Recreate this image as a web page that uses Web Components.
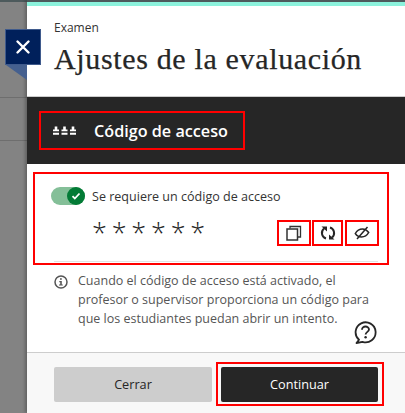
<!DOCTYPE html>
<html lang="es">
<head>
<meta charset="utf-8">
<title>Ajustes de la evaluación</title>
<style>
  html, body { margin: 0; height: 100%; overflow: hidden; }
  body { font-family: "Open Sans", "Liberation Sans", sans-serif; color: #262626; }
</style>
</head>
<body>
<app-shell>
  <panel-header label="Examen" heading="Ajustes de la evaluación"></panel-header>
  <access-bar>Código de acceso</access-bar>
  <code-box></code-box>
  <info-note>Cuando el código de acceso está activado, el profesor o supervisor proporciona un código para que los estudiantes puedan abrir un intento.</info-note>
  <panel-footer></panel-footer>
</app-shell>
<script>
class AppShell extends HTMLElement {
  constructor() {
    super();
    const shadow = this.attachShadow({ mode: 'open' });
    shadow.innerHTML = `
      <style>
        :host { display: flex; width: 405px; height: 413px; position: relative; overflow: hidden; background: #838383; }
        .backdrop {
          width: 27px; flex: none;
          display: flex; flex-direction: column;
          background: #838383;
          border-top: 2px solid #4d5a5c;
        }
        .backdrop i { display: block; height: 1px; background: #6e6e6e; margin-top: 95px; }
        .backdrop i + i { margin-top: 42px; }
        .panel {
          flex: 1; min-width: 0;
          display: flex; flex-direction: column;
          background: #fff;
          border-top: 2px solid #4d5a5c;
          box-shadow: -2px 0 3px rgba(0,0,0,.25);
        }
        .accent { height: 4px; background: #8cf2dc; flex: none; }
        .close {
          position: absolute; left: 5px; top: 29px;
          width: 36px; height: 36px;
          box-sizing: border-box;
          background: #00205b;
          border: 1px solid #3f5a8c;
          display: flex; align-items: center; justify-content: center;
        }
        .fold { position: absolute; left: 6px; top: 65px; }
      </style>
      <div class="backdrop"><i></i><i></i></div>
      <div class="panel">
        <div class="accent"></div>
        <slot></slot>
      </div>
      <div class="close">
        <svg width="16" height="16" viewBox="0 0 16 16"><path d="M2.5 2.5l11 11M13.500 2.500l-11 11" stroke="#fff" stroke-width="2.400" stroke-linecap="round"/></svg>
      </div>
      <svg class="fold" width="21" height="15" viewBox="0 0 21 15"><path d="M0 0H21V15Z" fill="#45608f"/></svg>
    `;
  }
}
customElements.define('app-shell', AppShell);

class PanelHeader extends HTMLElement {
  constructor() {
    super();
    this.attachShadow({ mode: 'open' });
  }
  connectedCallback() {
    this.shadowRoot.innerHTML = `
      <style>
        :host { display: block; height: 91px; box-sizing: border-box; padding: 13px 0 0 27px; border-bottom: 1px solid #cdcdcd; }
        .label { font-size: 12px; line-height: 18px; color: #333; }
        h1 {
          margin: 3px 0 0;
          font: 400 30px/38px "Liberation Serif", serif;
          letter-spacing: 0.650px;
          -webkit-text-stroke: 0.250px #262626;
          color: #262626;
          white-space: nowrap;
        }
      </style>
      <div class="label">${this.getAttribute('label')}</div>
      <h1>${this.getAttribute('heading')}</h1>
    `;
  }
}
customElements.define('panel-header', PanelHeader);

class AccessBar extends HTMLElement {
  constructor() {
    super();
    const shadow = this.attachShadow({ mode: 'open' });
    shadow.innerHTML = `
      <style>
        :host { display: block; background: #262626; height: 67px; box-sizing: border-box; padding: 14px 0 0 12px; }
        .frame {
          display: flex; align-items: center;
          width: 206px; height: 39px; box-sizing: border-box;
          border: 2px solid #f00;
          padding-left: 12px;
          color: #fff; font-weight: 600; font-size: 16.200px;
        }
        svg { margin-right: 18px; flex: none; }
      </style>
      <div class="frame">
        <svg width="23" height="10" viewBox="0 0 23 10" fill="#fff">
          <path d="M1.700 .5h2.600v3H6v1.800H0V3.500h1.700zM0 6.800h6v2H0z"/>
          <path d="M10.200 .5h2.600v3h1.700v1.800h-6V3.500h1.700zM8.500 6.800h6v2h-6z"/>
          <path d="M18.700 .5h2.600v3H23v1.800h-6V3.500h1.700zM17 6.800h6v2h-6z"/>
        </svg>
        <slot></slot>
      </div>
    `;
  }
}
customElements.define('access-bar', AccessBar);

class ToggleSwitch extends HTMLElement {
  constructor() {
    super();
    const shadow = this.attachShadow({ mode: 'open' });
    shadow.innerHTML = `
      <style>
        :host { display: block; position: relative; width: 34px; height: 18px; border-radius: 9px; background: #84bf98; flex: none; }
        .knob {
          position: absolute; right: 0; top: 0;
          width: 18px; height: 18px; border-radius: 50%;
          background: #037b36;
          display: flex; align-items: center; justify-content: center;
        }
      </style>
      <div class="knob">
        <svg width="10" height="10" viewBox="0 0 10 10"><path d="M1.500 5.200l2.300 2.300 4.700-5" fill="none" stroke="#fff" stroke-width="1.800"/></svg>
      </div>
    `;
  }
}
customElements.define('toggle-switch', ToggleSwitch);

class IconButton extends HTMLElement {
  constructor() {
    super();
    const shadow = this.attachShadow({ mode: 'open' });
    shadow.innerHTML = `
      <style>
        :host {
          display: flex; align-items: center; justify-content: center;
          height: 26px; box-sizing: border-box;
          border: 2px solid #f00;
        }
      </style>
      <slot></slot>
    `;
  }
}
customElements.define('icon-button', IconButton);

class CodeBox extends HTMLElement {
  constructor() {
    super();
    const shadow = this.attachShadow({ mode: 'open' });
    shadow.innerHTML = `
      <style>
        :host {
          display: block; box-sizing: border-box;
          width: 356px; height: 93px;
          margin: 8px 0 0 6px;
          border: 2px solid #f00;
          padding: 13px 0 0 16px;
        }
        .top { display: flex; align-items: center; gap: 7px; font-size: 12.550px; color: #333; height: 18px; }
        .bottom { display: flex; margin-top: 15px; align-items: flex-start; }
        .stars { width: 185px; padding-left: 41px; font: 300 27px/25px "Open Sans", sans-serif; letter-spacing: 4.800px; color: #262626; flex: none; white-space: nowrap; }
        .tools { display: flex; }
        icon-button:nth-child(1) { width: 34px; }
        icon-button:nth-child(2) { width: 31px; margin-left: 1px; }
        icon-button:nth-child(3) { width: 34px; margin-left: 2px; }
      </style>
      <div class="top"><toggle-switch></toggle-switch><span>Se requiere un código de acceso</span></div>
      <div class="bottom">
        <div class="stars">******</div>
        <div class="tools">
          <icon-button>
            <svg width="16" height="16" viewBox="0 0 16 16" fill="none" stroke="#333"><rect x="1" y="4" width="10.500" height="11" stroke-width="1.500"/><path d="M4 3.500V1.500h10.500V12h-2.500" stroke-width="1.300"/></svg>
          </icon-button>
          <icon-button>
            <svg width="16" height="16" viewBox="0 0 16 16" fill="none" stroke="#262626" stroke-width="2"><path d="M6 13.500A5.800 5.800 0 0 1 4 3.500"/><path d="M10 2.500A5.800 5.800 0 0 1 12 12.500"/><path d="M1.500 1.500h5.500v5zM14.500 14.500H9v-5z" fill="#262626" stroke="none"/></svg>
          </icon-button>
          <icon-button>
            <svg width="16" height="14" viewBox="0 0 16 14" fill="none" stroke="#262626" stroke-width="1.500"><path d="M1.300 7.500C3 4.500 5.500 3 8.500 3c2.300 0 4.400 1 6.200 3.500C13 9.500 10.500 11 7.500 11 5 11 3 10 1.300 7.500z"/><path d="M3 13L13.500 1"/></svg>
          </icon-button>
        </div>
      </div>
    `;
  }
}
customElements.define('code-box', CodeBox);

class InfoNote extends HTMLElement {
  constructor() {
    super();
    const shadow = this.attachShadow({ mode: 'open' });
    shadow.innerHTML = `
      <style>
        :host { display: block; flex: 1; min-height: 0; box-sizing: border-box; margin: -4px 0 0 0; }
        .wrap { margin: 0 0 0 27px; width: 324px; border-top: 1px solid #e3e3e3; padding: 9px 0 0 24px; box-sizing: border-box; position: relative; font-size: 12.500px; line-height: 19px; color: #555; }
        .i { position: absolute; left: 0; top: 13px; }
        .help { position: absolute; left: 300px; top: 59px; }
      </style>
      <div class="wrap">
        <svg class="i" width="14" height="14" viewBox="0 0 14 14"><circle cx="7" cy="7" r="6" fill="none" stroke="#555" stroke-width="1.500"/><path d="M6 3.200h1.800v1.600H6zM5.300 6h2.500v3.400h1v1.200H5V9.400h1.200V7.200h-.9z" fill="#555"/></svg>
        <slot></slot>
        <svg class="help" width="23" height="23" viewBox="0 0 23 23" fill="none"><path d="M5 18.800A10 10 0 1 1 8.500 20.800L2.500 22z" stroke="#262626" stroke-width="1.800" stroke-linejoin="round"/><path d="M8 8.800c0-2 1.600-3.300 3.500-3.300s3.500 1.300 3.500 3c0 2.300-3.400 2.500-3.400 5" stroke="#262626" stroke-width="1.800"/><circle cx="11.600" cy="16.300" r="1.200" fill="#262626"/></svg>
      </div>
    `;
  }
}
customElements.define('info-note', InfoNote);

class PanelFooter extends HTMLElement {
  constructor() {
    super();
    const shadow = this.attachShadow({ mode: 'open' });
    shadow.innerHTML = `
      <style>
        :host {
          display: flex; gap: 4px; flex: none; align-items: center;
          height: 61px; box-sizing: border-box;
          background: #f8f8f8; border-top: 1px solid #cdcdcd;
          padding: 2px 0 0 27px;
        }
        .btn {
          display: flex; align-items: center; justify-content: center;
          height: 35px; width: 158px; border-radius: 2px; font-size: 12.700px; box-sizing: border-box;
        }
        .cancel { background: #cdcdcd; color: #262626; }
        .frame { border: 2px solid #f00; padding-left: 3px; display: flex; height: 44px; width: 168px; box-sizing: border-box; align-items: center; }
        .ok { background: #262626; color: #fff; width: 157px; }
      </style>
      <div class="btn cancel">Cerrar</div>
      <div class="frame"><div class="btn ok">Continuar</div></div>
    `;
  }
}
customElements.define('panel-footer', PanelFooter);
</script>
</body>
</html>
